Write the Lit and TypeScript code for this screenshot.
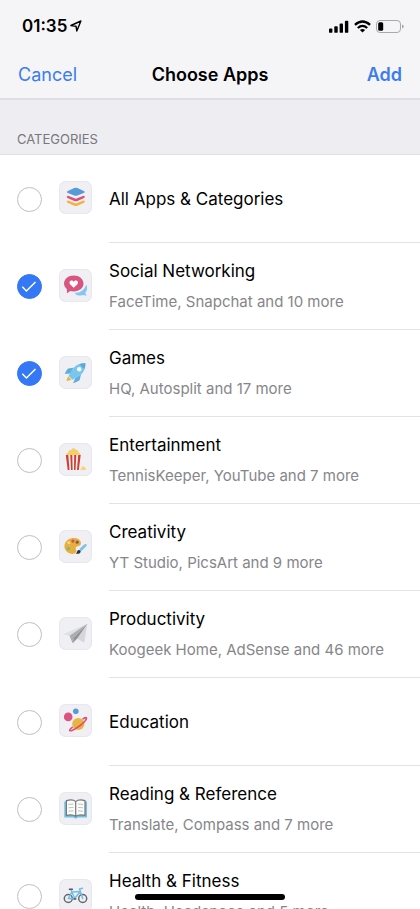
import { LitElement, html, svg, css, nothing, SVGTemplateResult } from "lit";
import { customElement, state } from "lit/decorators.js";

interface Category {
  id: string;
  title: string;
  detail?: string;
  selected?: boolean;
  art: SVGTemplateResult;
}

const layers = svg`
  <path fill="#efb43e" d="M7.8 20.2 Q8.5 19 10.3 20 L16.8 22.6 L23.3 20 Q25 19 25.8 20.2 Q26 21.4 24.6 22 L18.4 24.7 Q16.8 25.4 15.2 24.7 L9 22 Q7.500 21.400 7.800 20.200z"/>
  <path fill="#dc5079" d="M7.800 15.400 Q8.500 14.200 10.300 15.200 L16.800 17.800 L23.300 15.200 Q25 14.200 25.800 15.400 Q26 16.600 24.600 17.200 L18.400 19.900 Q16.800 20.600 15.200 19.900 L9 17.200 Q7.500 16.600 7.800 15.400z"/>
  <path fill="#559bd6" d="M8.400 10.200 L15.200 7.100 Q16.800 6.400 18.400 7.100 L25.200 10.200 Q26.400 11 25.200 11.700 L18.400 14.500 Q16.800 15.200 15.200 14.500 L8.400 11.700 Q7.200 11 8.400 10.200z"/>`;

const chat = svg`
  <path fill="#82c8ee" d="M27.200 15.500 C28.700 18.500 28.500 21.500 26.200 23.700 L27.600 26.800 L23.800 25.900 C20.800 27.200 17.200 26.500 15.600 24 C21 24 26 20.500 27.200 15.500z"/>
  <path fill="#d95580" d="M14.800 6.500 C20.200 6.500 24.500 10 24.500 14.600 C24.500 19.200 20.200 22.500 14.800 22.500 C13.500 22.500 12.400 22.300 11.300 22 L8 24.200 L7.800 20.100 C6.100 18.700 5 16.800 5 14.600 C5 10 9.400 6.500 14.800 6.500z"/>
  <path fill="#fff" d="M14.700 18.800 L11.300 15.500 C9.700 13.800 10.700 11.500 12.500 11.500 C13.500 11.500 14.300 12 14.700 12.900 C15.200 12 16 11.500 17 11.500 C18.800 11.500 19.700 13.800 18.200 15.500z"/>`;

const rocket = svg`
  <path fill="#62add9" d="M14.500 11.700 L9 12.500 Q7 14.500 5.800 18 L11.500 17.500z M22 18.600 L20.600 24.300 Q17.500 26.500 14 27.200 L16.300 22z"/>
  <path fill="#7ac6ec" d="M26.300 7.200 C20.500 7 16.300 9.200 13.400 13.200 L9.500 20 L13.500 23.800 L19.900 20.200 C24.300 17.200 26.700 13 26.300 7.200z"/>
  <path fill="#5ca8d2" d="M26.300 7.200 C23.900 7 21.900 7.400 20.300 8.200 L25.100 13.100 C26.100 11.400 26.500 9.500 26.300 7.200z"/>
  <circle cx="20.200" cy="13.200" r="2.200" fill="#f7fbfd"/>
  <path fill="#efb43e" d="M9.300 20.400 Q7.600 22 7.500 24.900 Q10.700 24.800 12.500 23.400 Q12 22.600 11 23 Q11.500 22 10.500 21.900 Q10.200 20.900 9.300 20.400z"/>`;

const popcorn = svg`
  <path fill="#f5cf68" d="M7.300 13 C6.700 11 8 9.700 9.400 9.500 C9.200 7.600 10.800 6.600 12.200 7 C13 4.700 16.200 4.800 16.900 7 C18.600 6.700 19.800 8 19.500 9.500 C21 9.800 22 11.200 21.300 13z"/>
  <path fill="#f8eee9" d="M6.800 12 H21.700 L19.800 27 H8.700z"/>
  <path fill="#ca4038" d="M6.800 12 H9.300 L10.500 27 H8.700z M11.300 12 H13.300 L13.600 27 H12z M15.200 12 H17.300 L16.500 27 H15z M19.200 12 H21.700 L19.800 27 H18z"/>
  <path fill="#f5d578" d="M21.900 27 C21.400 25.600 22 24.600 22.900 24.500 C23 23 25 22.900 25.300 24.200 C26.700 24.300 27.400 25.800 26.600 27z"/>`;

const palette = svg`
  <path fill="#e7af3e" d="M14 8 C19.300 7.700 22.600 10.500 21.900 13.900 C21.400 16.400 18.300 15.600 17 17.300 C15.700 19 18.500 20.300 16.800 22.600 C15.200 24.600 11.400 24.300 8.900 22.600 C6.300 20.900 5.100 18.200 5.500 15.300 C6.100 11.200 9.600 8.200 14 8z"/>
  <circle cx="9.800" cy="12.700" r="1.500" fill="#f1df67"/>
  <circle cx="13.900" cy="11.100" r="1.600" fill="#d54f62"/>
  <circle cx="18.200" cy="12.200" r="1.600" fill="#786250"/>
  <circle cx="9.400" cy="18.600" r="1.600" fill="#77b789"/>
  <path fill="#79c2e9" d="M20.300 19 L25.300 14.500 Q27 13.500 27.700 14.600 Q28 15.500 27 16.600 L22.200 21.200z"/>
  <path fill="#29313a" d="M20.100 19.900 Q22 20 21.700 21.900 Q20.400 24.700 16.700 23.500 Q18.200 22.800 18.200 21.300 Q18.700 19.900 20.100 19.900z"/>`;

const plane = svg`
  <path fill="#dfe0e3" d="M28.300 6.800 L4.200 17.300 L11.500 19.300z"/>
  <path fill="#d6d7da" d="M28.300 6.800 L25.200 25.700 L16.500 20.800z"/>
  <path fill="#acadb0" d="M28.300 6.800 L10.500 18.800 L13.600 26.200 L15.500 20z"/>
  <path fill="#909295" d="M28.300 6.800 L15.300 20.300 L13.600 26.200 L18 21.700z"/>`;

const planets = svg`
  <circle cx="16.800" cy="7.300" r="2.800" fill="#569bd4"/>
  <circle cx="9.200" cy="12.900" r="4.300" fill="#db5480"/>
  <circle cx="19.300" cy="20" r="6.100" fill="#ebb33f"/>
  <path fill="none" stroke="#db5472" stroke-width="1.600" stroke-linecap="round" d="M24 14.900 C26.500 13.300 28 13.200 27.400 14.800 C26.300 17.100 22.800 20.500 18.900 23 C15 25.600 11.200 27.700 10.700 26.400 C10.400 25.700 11.700 24.500 13.200 23.300"/>`;

const book = svg`
  <path fill="#73c0e0" d="M5.300 9.500 H28 V25.600 H18.800 L16.700 26.700 L14.500 25.600 H5.300z"/>
  <path fill="#fbfbfa" stroke="#757779" stroke-width="1.200" stroke-linejoin="round" d="M16.700 9.600 C14.500 7.600 10.500 7.800 7.400 8.700 V23.400 C10.600 22.600 14.300 22.600 16.700 24.300 C19.100 22.600 22.800 22.600 26 23.400 V8.700 C22.900 7.800 18.900 7.600 16.700 9.600z M16.700 9.600 V24.200"/>
  <path fill="none" stroke="#b8babc" stroke-width="0.900" d="M9.500 12.500 L14.500 12 M9.500 15.800 L14.500 15.400 M9.500 19.200 L14.500 18.800 M19 12 L24 12.500 M19 15.400 L24 15.800 M19 18.800 L24 19.200"/>`;

const bicycle = svg`
  <g fill="none" stroke-linecap="round" stroke-linejoin="round">
    <g stroke="#66686b" stroke-width="1.500">
      <circle cx="9.300" cy="19.500" r="4"/>
      <circle cx="23.700" cy="19.500" r="4"/>
    </g>
    <path stroke="#72bde7" stroke-width="1.500" d="M9.300 19.500 L12.800 13 L21.300 12.500 L15.700 19.500 L12 10.800 M9.300 19.500 H15.700 M23.700 19.500 L20.500 10 L23.500 9.200"/>
    <path stroke="#55585c" stroke-width="1.500" d="M10.400 10.300 H13.400 M15 20 H16.800"/>
  </g>`;

const CATEGORIES: Category[] = [
  { id: "all", title: "All Apps & Categories", art: layers },
  { id: "social", title: "Social Networking", detail: "FaceTime, Snapchat and 10 more", selected: true, art: chat },
  { id: "games", title: "Games", detail: "HQ, Autosplit and 17 more", selected: true, art: rocket },
  { id: "entertainment", title: "Entertainment", detail: "TennisKeeper, YouTube and 7 more", art: popcorn },
  { id: "creativity", title: "Creativity", detail: "YT Studio, PicsArt and 9 more", art: palette },
  { id: "productivity", title: "Productivity", detail: "Koogeek Home, AdSense and 46 more", art: plane },
  { id: "education", title: "Education", art: planets },
  { id: "reading", title: "Reading & Reference", detail: "Translate, Compass and 7 more", art: book },
  { id: "health", title: "Health & Fitness", detail: "Health, Headspace and 5 more", art: bicycle },
];

@customElement("app-root")
export class AppRoot extends LitElement {
  @state() private chosen = new Set(CATEGORIES.filter((c) => c.selected).map((c) => c.id));

  static styles = css`
    :host {
      display: flex;
      flex-direction: column;
      height: 100vh;
      overflow: hidden;
      background: #fff;
      color: #000;
      font-family: Inter, "Liberation Sans", sans-serif;
    }
    .top {
      flex: none;
      background: #f5f5f8;
      border-bottom: 2px solid #dedee3;
    }
    .status {
      display: flex;
      align-items: center;
      justify-content: space-between;
      height: 52px;
      padding: 0 16px 0 22px;
    }
    .clock {
      display: flex;
      align-items: center;
      gap: 3px;
      font-size: 17px;
      font-weight: 600;
      line-height: 20px;
    }
    .signals {
      display: flex;
      align-items: center;
      gap: 5px;
    }
    svg {
      display: block;
    }
    .nav {
      display: grid;
      grid-template-columns: 1fr auto 1fr;
      align-items: center;
      height: 46px;
      padding: 0 18px;
    }
    .nav h1 {
      margin: 0;
      font-size: 18px;
      font-weight: 600;
      line-height: 24px;
    }
    .nav button {
      justify-self: start;
      padding: 0;
      border: 0;
      background: none;
      color: #3c7cf0;
      font: inherit;
      font-size: 18px;
      line-height: 24px;
      cursor: pointer;
    }
    .nav .add {
      justify-self: end;
      font-weight: 600;
    }
    .content {
      flex: 1;
      min-height: 0;
      overflow-y: auto;
      scrollbar-width: none;
    }
    .section {
      margin: 0;
      padding: 29px 17px 5px;
      border-bottom: 1px solid #dfdfe3;
      background: #eeedf2;
      color: #77777c;
      font-size: 13px;
      font-weight: 400;
      line-height: 20px;
    }
    .list {
      margin: 0;
      padding: 0;
      list-style: none;
    }
    .row {
      display: flex;
      align-items: center;
      gap: 17px;
      padding-left: 17px;
      cursor: pointer;
    }
    .check {
      display: grid;
      flex: none;
    }
    .check > * {
      grid-area: 1 / 1;
    }
    .check input {
      appearance: none;
      box-sizing: border-box;
      width: 25px;
      height: 25px;
      margin: 0;
      border: 1px solid #bfbfc3;
      border-radius: 50%;
      background: #fff;
    }
    .check input:checked {
      border-color: #3478f6;
      background: #3478f6;
    }
    .check svg {
      visibility: hidden;
      pointer-events: none;
    }
    .check input:checked + svg {
      visibility: visible;
    }
    .tile {
      box-sizing: border-box;
      flex: none;
      width: 33px;
      height: 33px;
      margin-bottom: 3px;
      border-radius: 7px;
      background: #efeff4;
      box-shadow: inset 0 0 0 1px #e8e7ed;
    }
    .text {
      display: flex;
      flex: 1;
      flex-direction: column;
      justify-content: center;
      box-sizing: border-box;
      min-width: 0;
      min-height: 87px;
      padding-top: 2px;
      border-bottom: 1px solid #e3e3e5;
      white-space: nowrap;
    }
    .text.single {
      min-height: 88px;
      padding-top: 0;
    }
    .title {
      font-size: 17px;
      line-height: 30px;
    }
    .detail {
      color: #86868a;
      font-size: 15px;
      line-height: 32px;
    }
    .home {
      position: fixed;
      bottom: 9px;
      left: 50%;
      width: 150px;
      height: 6px;
      margin-left: -75px;
      border-radius: 3px;
      background: #000;
    }
  `;

  private toggle(id: string) {
    const next = new Set(this.chosen);
    next.has(id) ? next.delete(id) : next.add(id);
    this.chosen = next;
  }

  private renderRow(c: Category) {
    return html`
      <li>
        <label class="row">
          <span class="check">
            <input type="checkbox" .checked=${this.chosen.has(c.id)} @change=${() => this.toggle(c.id)} />
            <svg width="25" height="25" viewBox="0 0 25 25" aria-hidden="true">
              <path d="M5.300 12.800 L9.400 17 L18.500 8" fill="none" stroke="#fff" stroke-width="1.500" />
            </svg>
          </span>
          <svg class="tile" viewBox="0 0 33 33" aria-hidden="true">${c.art}</svg>
          <span class="text ${c.detail ? "" : "single"}">
            <span class="title">${c.title}</span>
            ${c.detail ? html`<span class="detail">${c.detail}</span>` : nothing}
          </span>
        </label>
      </li>
    `;
  }

  render() {
    return html`
      <header class="top">
        <div class="status">
          <div class="clock">
            <span>01:35</span>
            <svg width="12" height="12" viewBox="0 0 12 12" aria-hidden="true">
              <path d="M0.900 5.500 L10.900 1 L6.800 11 L6 6.200z" fill="none" stroke="#000" stroke-width="1.400" stroke-linejoin="round" />
            </svg>
          </div>
          <div class="signals">
            <svg width="20" height="13" viewBox="0 0 20 13" role="img" aria-label="Signal">
              <rect x="0" y="8.500" width="3.400" height="4.300" rx="0.900" />
              <rect x="5.300" y="6.300" width="3.400" height="6.500" rx="0.900" />
              <rect x="10.600" y="3.600" width="3.400" height="9.200" rx="0.900" />
              <rect x="15.900" y="0.800" width="3.400" height="12" rx="0.900" />
            </svg>
            <svg width="17" height="13" viewBox="0 0 17 13" role="img" aria-label="Wi-Fi">
              <g fill="none" stroke="#000" stroke-width="2.300">
                <path d="M0.900 4.900 Q8.500 -1.900 16.100 4.900" />
                <path d="M3.800 8 Q8.500 3.800 13.200 8" />
              </g>
              <path d="M5.900 9.900 Q8.500 7.900 11.100 9.900 L8.500 12.600z" />
            </svg>
            <svg width="28" height="13" viewBox="0 0 28 13" role="img" aria-label="Battery">
              <rect x="0.500" y="0.500" width="24" height="12" rx="3.500" fill="none" stroke="#a9a9ad" />
              <rect x="2.200" y="2.200" width="5" height="8.600" rx="1.500" />
              <path d="M26 4.500 Q27.800 5 27.800 6.500 Q27.800 8 26 8.500z" fill="#a9a9ad" />
            </svg>
          </div>
        </div>
        <nav class="nav">
          <button type="button">Cancel</button>
          <h1>Choose Apps</h1>
          <button type="button" class="add">Add</button>
        </nav>
      </header>
      <main class="content">
        <h2 class="section">CATEGORIES</h2>
        <ul class="list">
          ${CATEGORIES.map((c) => this.renderRow(c))}
        </ul>
      </main>
      <div class="home"></div>
    `;
  }
}
